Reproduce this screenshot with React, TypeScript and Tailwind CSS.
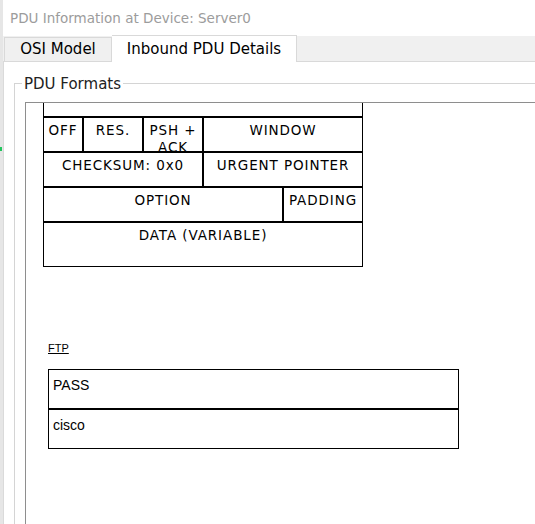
const ui = { fontFamily: '"DejaVu Sans", sans-serif' };
const tbl = { fontFamily: '"DejaVu Sans", sans-serif', letterSpacing: "0.9px" };

function Cell({ w, h = 35, label, nowrap }: { w: number; h?: number; label: string; nowrap?: boolean }) {
  return (
    <div
      className={
        "box-border overflow-hidden border border-black pt-[4px] text-center text-[13.5px] leading-[17px] text-black" +
        (nowrap ? " whitespace-nowrap" : "")
      }
      style={{ width: w, height: h }}
    >
      {label}
    </div>
  );
}

export default function App() {
  return (
    <div className="flex h-[524px] w-[535px] overflow-hidden bg-white" style={ui}>
      {/* window edge */}
      <div className="w-[3px] shrink-0 bg-[#e6e6e6]">
        <div className="ml-0 mt-[147px] h-[4px] w-[2px] bg-[#22c55e]" />
      </div>

      <div className="flex min-w-0 flex-1 flex-col">
        {/* Title */}
        <div className="flex h-[36px] items-center pl-[7px] text-[13.5px] text-[#9c9c9c]">
          PDU Information at Device: Server0
        </div>

        {/* Tabs */}
        <div className="flex h-[26px] items-end border-b border-[#d9d9d9] bg-[#f0f0f0] pl-[1px]">
          <div className="box-border flex h-[24px] w-[108px] items-center justify-center border border-b-0 border-[#d9d9d9] bg-[#f0f0f0] text-[15px] text-black">
            OSI Model
          </div>
          <div className="-mb-px box-border flex h-[27px] w-[185px] items-center justify-center border border-b-0 border-l-0 border-[#d9d9d9] bg-white text-[15px] text-black">
            Inbound PDU Details
          </div>
        </div>

        {/* Tab content */}
        <div className="flex flex-1 flex-col border-l border-[#dadada] pl-[10px] pt-[21px]">
          <div className="relative flex flex-1 flex-col border-l border-t border-[#d4d4d4] pl-[10px] pt-[18px]">
            <span className="absolute -top-[9px] left-[7px] bg-white px-[2px] text-[15px] leading-[18px] text-[#222]">
              PDU Formats
            </span>

            {/* scroll area */}
            <div className="flex-1 border-l border-t border-[#8e8e8e] pl-[17px]">
              <div className="flex w-[320px] flex-col" style={tbl}>
                <div className="box-border h-[14px] border border-t-0 border-black" />
                <div className="flex">
                  <Cell w={40} label="OFF" nowrap />
                  <Cell w={60} label="RES." />
                  <Cell w={60} label="PSH + ACK" />
                  <Cell w={160} label="WINDOW" />
                </div>
                <div className="flex">
                  <Cell w={160} label="CHECKSUM: 0x0" nowrap />
                  <Cell w={160} label="URGENT POINTER" nowrap />
                </div>
                <div className="flex">
                  <Cell w={240} label="OPTION" />
                  <Cell w={80} label="PADDING" nowrap />
                </div>
                <div className="flex">
                  <Cell w={320} h={45} label="DATA (VARIABLE)" />
                </div>
              </div>

              {/* FTP */}
              <div className="ml-[5px] mt-[74px]" style={{ fontFamily: '"Liberation Sans", sans-serif' }}>
                <div className="text-[11px] leading-[14px] text-black underline">FTP</div>
                <div className="mt-[14px] flex w-[411px] flex-col">
                  <div className="box-border h-[40px] border border-black pl-[4px] pt-[5px] text-[14px] text-black">
                    PASS
                  </div>
                  <div className="box-border h-[40px] border border-black pl-[4px] pt-[5px] text-[14px] text-black">
                    cisco
                  </div>
                </div>
              </div>
            </div>
          </div>
        </div>
      </div>
    </div>
  );
}
